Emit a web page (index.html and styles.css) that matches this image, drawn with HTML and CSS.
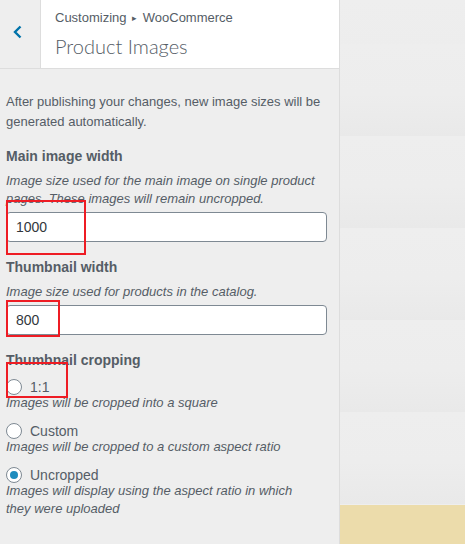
FILE: index.html
```html
<!DOCTYPE html>
<html>
<head>
    <title>Product Images</title>
    <link rel="stylesheet" href="styles.css">
</head>
<body>
    <div class="sidebar">
        <div class="header">
            <div class="back">
                <svg width="12" height="14" viewBox="0 0 12 14">
                    <path d="M8.5 1.5 L3 7 L8.5 12.5" fill="none" stroke="#0073aa" stroke-width="2.4"/>
                </svg>
            </div>
            <div class="title">
                <div class="crumb">Customizing <span class="sep">&#9656;</span> WooCommerce</div>
                <div class="section">Product Images</div>
            </div>
        </div>

        <div class="content">
            <p class="notice">After publishing your changes, new image sizes will be generated automatically.</p>

            <div class="control">
                <div class="control-title">Main image width</div>
                <div class="description">Image size used for the main image on single product pages. These images will remain uncropped.</div>
                <div class="field">
                    <input type="text" value="1000">
                    <span class="mark mark-main"></span>
                </div>
            </div>

            <div class="control">
                <div class="control-title">Thumbnail width</div>
                <div class="description">Image size used for products in the catalog.</div>
                <div class="field">
                    <input type="text" value="800">
                    <span class="mark mark-thumb"></span>
                </div>
            </div>

            <div class="control">
                <div class="control-title">Thumbnail cropping</div>
                <div class="option">
                    <label class="radio-row"><span class="radio"></span>1:1</label>
                    <span class="mark mark-crop"></span>
                    <div class="description">Images will be cropped into a square</div>
                </div>
                <div class="option">
                    <label class="radio-row"><span class="radio"></span>Custom</label>
                    <div class="description">Images will be cropped to a custom aspect ratio</div>
                </div>
                <div class="option">
                    <label class="radio-row"><span class="radio checked"></span>Uncropped</label>
                    <div class="description">Images will display using the aspect ratio in which they were uploaded</div>
                </div>
            </div>
        </div>
    </div>

    <div class="preview">
        <div class="preview-page"></div>
        <div class="preview-footer"></div>
    </div>
</body>
</html>
```

FILE: styles.css
```css
body {
    margin: 0;
    padding: 0;
    font-family: "Liberation Sans", Arial, sans-serif;
    font-size: 13px;
    color: #555d66;
    display: flex;
    height: 544px;
    overflow: hidden;
}

.sidebar {
    width: 339px;
    border-right: 1px solid #dddddd;
    background-color: #eeeeee;
    flex-shrink: 0;
}

.header {
    display: flex;
    height: 68px;
    background-color: #fff;
    border-bottom: 1px solid #dddddd;
}

.back {
    width: 41px;
    border-right: 1px solid #dddddd;
    background-color: #eeeeee;
    display: flex;
    align-items: center;
    justify-content: center;
    padding: 0 5px 4px 0;
    box-sizing: border-box;
}

.title {
    padding: 8px 0 0 14px;
}

.crumb {
    font-size: 13px;
    line-height: 20px;
    color: #555d66;
}

.sep {
    font-size: 9px;
    position: relative;
    top: -1px;
    margin: 0 2px;
}

.section {
    font-family: Lato, "Liberation Sans", sans-serif;
    font-size: 20px;
    font-weight: 300;
    line-height: 30px;
    margin-top: 2px;
    color: #555d66;
}

.content {
    padding: 23px 12px 0 6px;
}

.notice {
    margin: 0;
    line-height: 20px;
}

.control {
    margin-top: 12px;
}

.control + .control {
    margin-top: 13px;
}

.control-title {
    font-size: 14px;
    font-weight: bold;
    line-height: 24px;
}

.description {
    font-style: italic;
    line-height: 18px;
    margin-top: 4px;
}

.field {
    position: relative;
    margin-top: 4px;
}

.field input {
    display: block;
    width: 100%;
    height: 30px;
    box-sizing: border-box;
    padding: 0 9px;
    border: 1px solid #7e8993;
    border-radius: 4px;
    background-color: #fff;
    font-family: "Liberation Sans", Arial, sans-serif;
    font-size: 14px;
    color: #32373c;
}

.mark {
    position: absolute;
    border: 2px solid #ee1c24;
    box-sizing: border-box;
}

.mark-main {
    left: 0;
    top: -12px;
    width: 80px;
    height: 55px;
}

.mark-thumb {
    left: 0;
    top: -5px;
    width: 54px;
    height: 37px;
}

.mark-crop {
    left: 0;
    top: -16px;
    width: 62px;
    height: 36px;
}

.option {
    position: relative;
    margin-top: 6px;
}

.option + .option {
    margin-top: 10px;
}

.option .description {
    margin-top: -2px;
    padding-right: 24px;
}

.radio-row {
    display: flex;
    align-items: center;
    height: 18px;
    font-size: 14px;
}

.radio {
    width: 16px;
    height: 16px;
    box-sizing: border-box;
    border: 1px solid #7e8993;
    border-radius: 50%;
    background-color: #fff;
    margin: 0 8px 0 0;
    display: flex;
    align-items: center;
    justify-content: center;
}

.radio.checked::before {
    content: "";
    width: 8px;
    height: 8px;
    border-radius: 50%;
    background-color: #1e8cbe;
}

.preview {
    flex: 1;
    display: flex;
    flex-direction: column;
}

.preview-page {
    flex: 1;
    background-color: #ececec;
    background-image: repeating-linear-gradient(to bottom, #eeeeee 0, #ededed 50px, #e9e9e9 92px);
    background-position: 0 44px;
}

.preview-footer {
    height: 39px;
    background-color: #ecdcab;
}
```
